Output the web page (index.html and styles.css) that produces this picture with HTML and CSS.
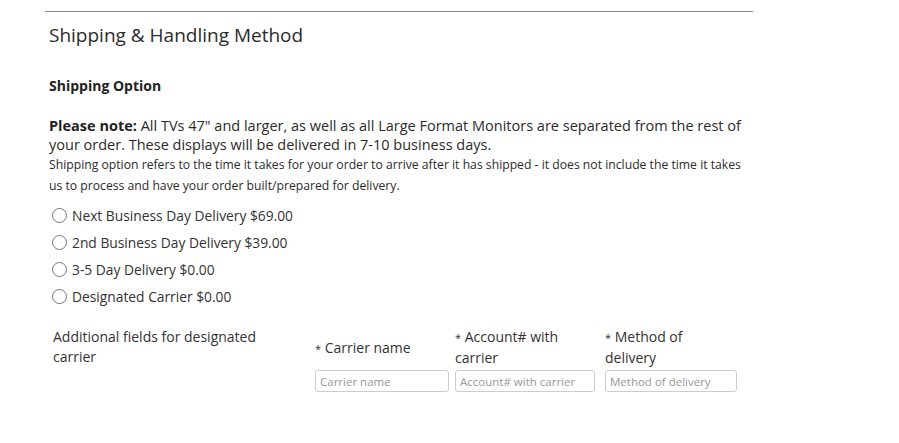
FILE: index.html
```html
<!DOCTYPE html>
<html lang="en">
<head>
    <meta charset="UTF-8">
    <title>Shipping &amp; Handling Method</title>
    <link rel="stylesheet" href="styles.css">
</head>
<body>

    <div class="section">
        <h2>Shipping &amp; Handling Method</h2>
        <h3>Shipping Option</h3>

        <p class="note"><b>Please note:</b> All TVs 47" and larger, as well as all Large Format Monitors are separated from the rest of your order. These displays will be delivered in 7-10 business days.</p>
        <p class="small">Shipping option refers to the time it takes for your order to arrive after it has shipped - it does not include the time it takes us to process and have your order built/prepared for delivery.</p>

        <div class="options">
            <label class="option"><input type="radio" name="ship" value="next"> Next Business Day Delivery $69.00</label>
            <label class="option"><input type="radio" name="ship" value="2nd"> 2nd Business Day Delivery $39.00</label>
            <label class="option"><input type="radio" name="ship" value="35"> 3-5 Day Delivery $0.00</label>
            <label class="option"><input type="radio" name="ship" value="carrier"> Designated Carrier $0.00</label>
        </div>

        <div class="carrier">
            <div class="carrier-title">Additional fields for designated carrier</div>
            <div class="field">
                <label for="carrierName" class="one-line"><span class="req">*</span> Carrier name</label>
                <input type="text" id="carrierName" class="w-name" placeholder="Carrier name">
            </div>
            <div class="field">
                <label for="carrierAcct"><span class="req">*</span> Account# with carrier</label>
                <input type="text" id="carrierAcct" class="w-acct" placeholder="Account# with carrier">
            </div>
            <div class="field">
                <label for="carrierMethod"><span class="req">*</span> Method of delivery</label>
                <input type="text" id="carrierMethod" class="w-method" placeholder="Method of delivery">
            </div>
        </div>
    </div>

</body>
</html>
```

FILE: styles.css
```css
body { margin: 0; font-family: "Open Sans", "Liberation Sans", sans-serif; color: #333; background: #fff; }
.section { width: 704px; margin: 11px 0 0 45px; border-top: 1px solid #8a8a8a; padding-left: 4px; }
h2 { font-size: 19px; font-weight: normal; margin: 10px 0 0; line-height: 26px; color: #2b2b2b; }
h3 { font-size: 14px; font-weight: bold; margin: 28px 0 0; line-height: 20px; color: #222; }
.note { font-size: 14.5px; line-height: 19px; margin: 20px 0 0; color: #2b2b2b; }
.note b { color: #222; }
.small { font-size: 12.2px; line-height: 21px; margin: 0; color: #2b2b2b; }
.options { margin-top: 6px; padding-left: 3px; }
.option { display: flex; align-items: center; font-size: 13.8px; height: 27px; }
.option input { margin: 0 5px 0 0; width: 15px; height: 15px; }
.carrier { display: grid; grid-template-columns: 262px 140px 150px 134px; margin-top: 13px; padding-left: 4px; }
.carrier-title { font-size: 14px; line-height: 20px; padding-top: 4px; padding-right: 40px; }
.field { display: flex; flex-direction: column; padding-top: 4px; }
.field label { font-size: 14px; line-height: 20px; height: 40px; box-sizing: border-box; padding-right: 10px; }
.field label.one-line { padding-top: 11px; }
.req { font-size: 11px; vertical-align: middle; }
.field input { margin-top: 3px; height: 22px; box-sizing: border-box; border: 1px solid #ccc; border-radius: 3px; padding: 2px 4px; font-family: inherit; font-size: 11.5px; color: #555; }
.field input::placeholder { color: #999; }
.w-name { width: 134px; }
.w-acct { width: 140px; }
.w-method { width: 132px; }
```
